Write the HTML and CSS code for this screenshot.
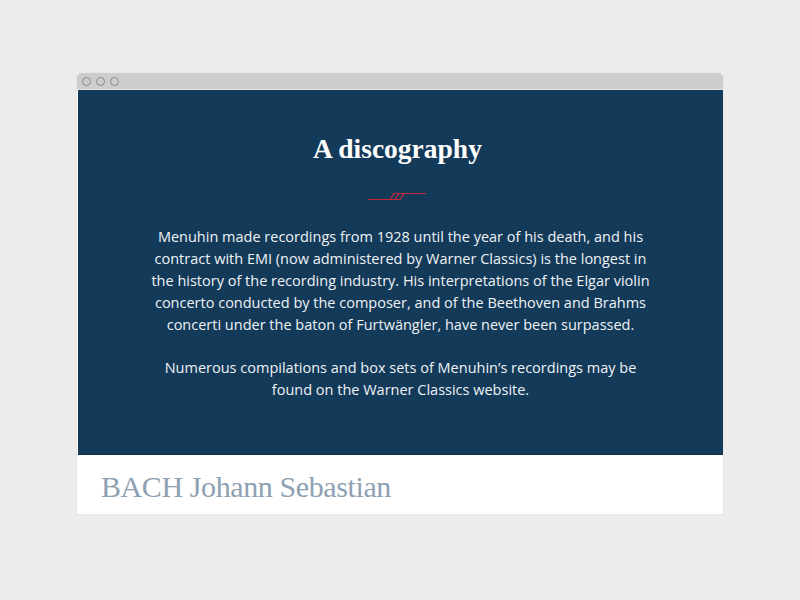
FILE: index.html
```html
<!DOCTYPE html>
<html lang="en">
<head>
<meta charset="utf-8">
<title>A discography</title>
<link rel="stylesheet" href="styles.css">
</head>
<body>
  <div class="window">
    <div class="titlebar">
      <span class="dot"></span>
      <span class="dot"></span>
      <span class="dot"></span>
    </div>
    <section class="intro">
      <h1 class="intro-title">A discography</h1>
      <svg class="ornament" width="58" height="10" viewBox="0 0 58 10" aria-hidden="true">
        <path d="M0 8.5H22M22 8.5L26 2.5H31L27 8.5ZM27 8.5L31 2.5H36L32 8.5ZM31 2.5H58" fill="none" stroke="#c8283d" stroke-width="1.2"/>
      </svg>
      <p class="intro-text">Menuhin made recordings from 1928 until the year of his death, and his contract with EMI (now administered by Warner Classics) is the longest in the history of the recording industry. His interpretations of the Elgar violin concerto conducted by the composer, and of the Beethoven and Brahms concerti under the baton of Furtwängler, have never been surpassed.</p>
      <p class="intro-text">Numerous compilations and box sets of Menuhin’s recordings may be found on the Warner Classics website.</p>
    </section>
    <section class="composer">
      <h2 class="composer-name">BACH Johann Sebastian</h2>
    </section>
  </div>
</body>
</html>
```

FILE: styles.css
```css
html, body {
  margin: 0;
  padding: 0;
}

body {
  background: #ececec;
  display: flex;
  justify-content: center;
  padding-top: 73px;
  height: 600px;
  box-sizing: border-box;
}

.window {
  width: 646px;
  align-self: flex-start;
  background: #ffffff;
  box-shadow: 0 0 2px rgba(0, 0, 0, 0.06);
}

.titlebar {
  height: 16px;
  background: #cdcdcd;
  border-radius: 4px 4px 0 0;
  border-bottom: 1px solid #e4e4e4;
  display: flex;
  align-items: center;
  gap: 5px;
  padding-left: 5px;
}

.dot {
  width: 7px;
  height: 7px;
  border: 1px solid #8a8a8a;
  border-radius: 50%;
  box-sizing: content-box;
}

.intro {
  background: #143a59;
  border-bottom: 1px solid #0f2f49;
  margin-left: 1px;
  height: 365px;
  box-sizing: border-box;
  padding: 42px 0 0;
  display: flex;
  flex-direction: column;
  align-items: center;
  color: #eef2f5;
}

.intro-title {
  margin: 0 6px 0 0;
  font-family: "Liberation Serif", "DejaVu Serif", serif;
  font-weight: bold;
  font-size: 27.5px;
  line-height: 34px;
  color: #ffffff;
}

.ornament {
  display: block;
  margin: 25px 8px 25px 0;
}

.intro-text {
  margin: 0 0 21px;
  width: 500px;
  text-align: center;
  font-family: "Open Sans", "Lato", sans-serif;
  font-size: 14.5px;
  line-height: 22px;
}

.composer {
  height: 59px;
  padding: 5px 0 0 24px;
  box-sizing: border-box;
  display: flex;
  align-items: center;
}

.composer-name {
  margin: 0;
  font-family: "Liberation Serif", serif;
  font-weight: normal;
  font-size: 30px;
  color: #8ea1b2;
  letter-spacing: -0.4px;
}
```
